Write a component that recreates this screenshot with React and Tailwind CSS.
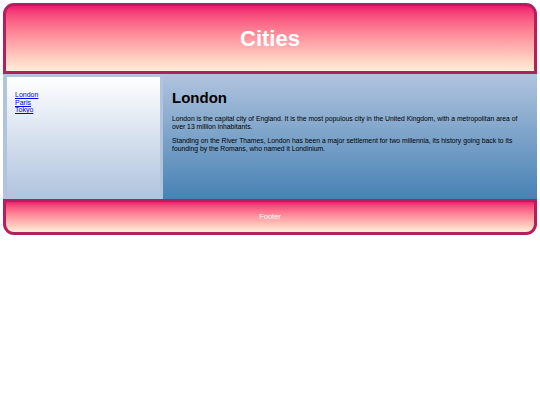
export default function App() {
  const font = { fontFamily: '"Liberation Sans", Arial, sans-serif' };
  return (
    <div className="w-[540px] px-[3px] pt-[3px]" style={font}>
      <header className="flex h-[71px] items-center justify-center rounded-t-[11px] border-[3px] border-[#b41f5e] bg-gradient-to-b from-[#f0186f] to-[#fdf0d6]">
        <h2 className="text-[22px] font-bold text-white">Cities</h2>
      </header>

      <section className="flex h-[125px] bg-[#b0c4de]">
        <nav className="ml-[4px] mt-[3px] mb-[2px] w-[153px] bg-gradient-to-b from-white to-[#b0c4de] px-[8px] pt-[14px]">
          <ul className="text-[7px] leading-[7.5px]">
            <li><a href="#" className="text-[#0000ee] underline">London</a></li>
            <li><a href="#" className="text-[#0000ee] underline">Paris</a></li>
            <li><a href="#" className="text-[#0000ee] underline">Tokyo</a></li>
          </ul>
        </nav>
        <article className="ml-[3px] flex-1 bg-gradient-to-b from-[#b0c4de] to-[#4682b4] px-[9px] pt-[15px]">
          <h1 className="text-[15px] leading-[18px] font-bold text-black">London</h1>
          <p className="mt-[8px] text-[6.8px] leading-[8px] text-black">
            London is the capital city of England. It is the most populous city in the United Kingdom, with a metropolitan area of over 13 million inhabitants.
          </p>
          <p className="mt-[6px] text-[6.8px] leading-[8px] text-black">
            Standing on the River Thames, London has been a major settlement for two millennia, its history going back to its founding by the Romans, who named it Londinium.
          </p>
        </article>
      </section>

      <footer className="flex h-[36px] items-center justify-center rounded-b-[11px] border-[3px] border-[#b41f5e] bg-gradient-to-b from-[#f0186f] to-[#fdf0d6]">
        <p className="text-[7.5px] text-white">Footer</p>
      </footer>
    </div>
  );
}
